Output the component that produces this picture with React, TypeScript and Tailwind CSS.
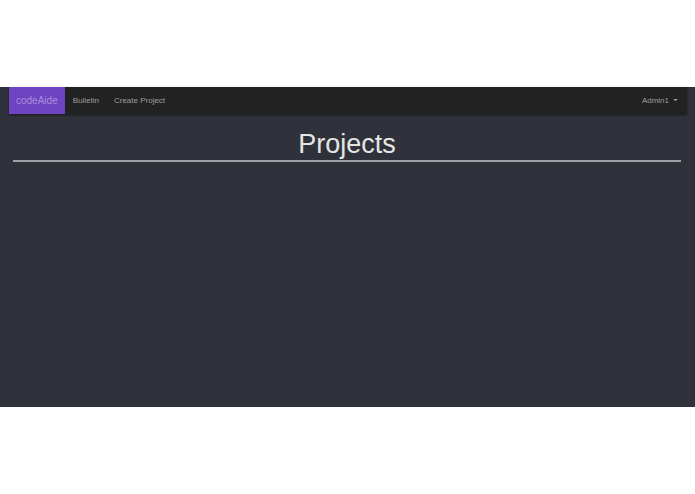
export default function App() {
  return (
    <div className="h-[494px] w-full bg-white font-['Liberation_Sans',Arial,sans-serif]">
      <div className="h-[87px]" />
      <div className="h-[320px] bg-[#2f323a]">
        <nav className="ml-[9px] mr-[8px] flex h-[27px] items-stretch bg-[#222222] text-[8px] text-[#9d9d9d] shadow-[0_1px_2px_rgba(0,0,0,0.5)]">
          <a className="flex items-center bg-[#6f42c1] px-[7px] text-[10px] text-[#a98fd8]">
            codeAide
          </a>
          <a className="flex items-center pl-[8px] pr-[7px]">Bulletin</a>
          <a className="flex items-center px-[8px]">Create Project</a>
          <div className="ml-auto flex items-center gap-[4px] pr-[9px]">
            <span>Admin1</span>
            <svg width="5" height="3" viewBox="0 0 6 4">
              <path d="M0 0h6L3 3z" fill="#9d9d9d" />
            </svg>
          </div>
        </nav>
        <div className="ml-[13px] mr-[14px]">
          <h1 className="pt-[14px] text-center text-[27px] leading-[32px] text-[#e6e6e6]">Projects</h1>
          <div className="h-[2px] bg-[#a0a2a6]" />
        </div>
      </div>
    </div>
  );
}
